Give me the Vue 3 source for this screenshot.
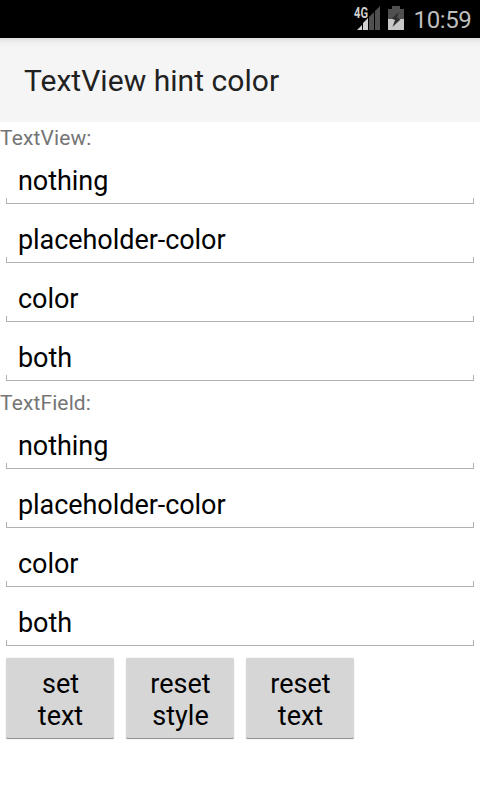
<script setup>
const groups = [{ title: 'TextView:' }, { title: 'TextField:' }]
const fields = ['nothing', 'placeholder-color', 'color', 'both']
const buttons = [['set', 'text'], ['reset', 'style'], ['reset', 'text']]
</script>

<template>
  <div class="screen">
    <header class="status">
      <svg class="signal" width="29" height="30" viewBox="-2 -6 29 30">
        <path d="M15 24V11L20 6V24ZM21 24V5L26 0V24Z" fill="#505050" />
        <path d="M3 24L8 19V24ZM9 24V17L14 12V24Z" fill="#d0d0d0" />
        <text class="network" x="0" y="12" textLength="14" lengthAdjust="spacingAndGlyphs">4G</text>
      </svg>
      <svg class="battery" width="16" height="24" viewBox="0 0 16 24">
        <path d="M4 0H12V3H16V13H0V3H4Z" fill="#505050" />
        <path d="M0 13H16V24H0Z" fill="#c8c8c8" />
        <path d="M11 6L3.5 12.5L7 14L4.5 21L12.5 13.5L9 12Z" fill="#303030" />
      </svg>
      <span class="clock">10:59</span>
    </header>
    <div class="bar"><h1>TextView hint color</h1></div>
    <section v-for="g in groups" :key="g.title" class="group">
      <div class="label">{{ g.title }}</div>
      <div v-for="f in fields" :key="f" class="field"><span>{{ f }}</span><i class="line"></i></div>
    </section>
    <div class="buttons">
      <button v-for="b in buttons" :key="b.join()"><span v-for="w in b" :key="w">{{ w }}</span></button>
    </div>
  </div>
</template>

<style>
body { margin: 0; background: #fff; }
</style>
<style scoped>
.screen { width: 480px; height: 800px; overflow: hidden; background: #fff; font-family: Roboto, sans-serif; }
.status { height: 38px; box-sizing: border-box; background: #000; display: flex; justify-content: flex-end; align-items: flex-start; padding: 0 9px 0 0; }
.signal { margin-right: 7px; overflow: visible; }
.battery { margin: 6px 10px 0 0; }
.network { font: 700 15px Roboto, sans-serif; fill: #d0d0d0; }
.clock { color: #bebebe; font-size: 24px; line-height: 28px; letter-spacing: -0.4px; margin: 6px -0.4px 0 0; }
.bar { height: 84px; background: linear-gradient(#dedede, #eeeeee 4px, #f5f5f5 10px); display: flex; align-items: center; padding-left: 24px; }
h1 { margin: 0; font-size: 30px; font-weight: 400; color: #212121; letter-spacing: 0.04px; }
.group { height: 265px; }
.label { height: 29px; line-height: 32px; font-size: 21px; color: #757575; letter-spacing: 0.12px; }
.field { height: 59px; box-sizing: border-box; padding: 14px 6px 0; font-size: 27px; line-height: 32px; color: #000; }
.field span { display: block; padding-left: 12px; letter-spacing: -0.06px; }
.line { display: block; margin-top: 1px; height: 6px; box-sizing: border-box; border: 1px solid #b2b2b2; border-top: 0; }
.buttons { display: flex; gap: 12px; padding: 6px; }
button { width: 108px; height: 81px; border: 0; border-bottom: 1px solid #929292; border-radius: 2px; background: #d6d6d6; font: 27px/32px Roboto, sans-serif; color: #000; padding: 4px 0 0 1px; display: flex; flex-direction: column; align-items: center; justify-content: center; box-shadow: 0 0 1px #bbb; }
</style>
